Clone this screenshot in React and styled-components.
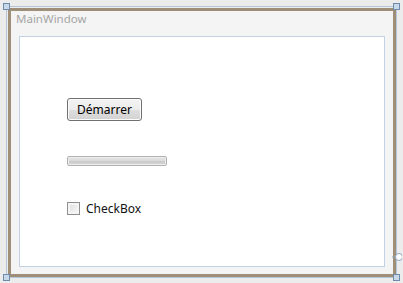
import React from "react";
import styled, { createGlobalStyle, css } from "styled-components";

const Global = createGlobalStyle`
  html, body { margin: 0; padding: 0; }
  body { font-family: "Noto Sans", "Open Sans", sans-serif; background: #ebebeb; }
`;

const Canvas = styled.div`
  position: relative;
  width: 403px;
  height: 283px;
  overflow: hidden;
  background: #ececec;
  padding: 8px 0 0 8px;
  box-sizing: border-box;
`;

const Selection = styled.div`
  position: absolute;
  left: 6px;
  top: 6px;
  width: 391px;
  height: 272px;
  border: 1px solid #b4c6da;
  box-sizing: border-box;
  pointer-events: none;
`;

const Handle = styled.div`
  position: absolute;
  width: 7px;
  height: 7px;
  box-sizing: border-box;
  border: 1px solid #6f8bab;
  background: #c9d8e8;
  ${(p) => (p.$v === "top" ? css`top: -4px;` : css`bottom: -4px;`)}
  ${(p) => (p.$h === "left" ? css`left: -4px;` : css`right: -4px;`)}
`;

const Adorner = styled.svg`
  position: absolute;
  right: -6px;
  bottom: 14px;
`;

const Frame = styled.div`
  width: 388px;
  height: 269px;
  box-sizing: border-box;
  border: 3px solid #a08f78;
  background: #f4f4f4;
  display: flex;
  flex-direction: column;
  padding: 0 8px 7px 8px;
`;

const Title = styled.div`
  font-size: 11.5px;
  color: #a6a6a6;
  height: 25px;
  line-height: 16px;
  margin-left: -3px;
`;

const Content = styled.div`
  flex: 1;
  background: #ffffff;
  border: 1px solid #c3d2e3;
  display: flex;
  flex-direction: column;
  align-items: flex-start;
  padding: 61px 0 0 47px;
`;

const Button = styled.button`
  width: 75px;
  height: 23px;
  box-sizing: border-box;
  border: 1px solid #707070;
  border-radius: 3px;
  background: linear-gradient(#f3f3f3 0%, #ececec 50%, #dedede 50%, #d2d2d2 100%);
  box-shadow: inset 0 0 0 1px #fcfcfc;
  font-family: "Noto Sans", "Open Sans", sans-serif;
  font-size: 12px;
  color: #000;
  padding: 0;
  line-height: 20px;
`;

const Progress = styled.div`
  margin-top: 35px;
  width: 100px;
  height: 10px;
  box-sizing: border-box;
  border: 1px solid #b2b2b2;
  border-radius: 2px;
  background: linear-gradient(#e6e6e6 0%, #dadada 50%, #cbcbcb 55%, #d6d6d6 100%);
  box-shadow: inset 0 0 0 1px #ededed;
`;

const CheckRow = styled.label`
  margin-top: 34px;
  display: flex;
  align-items: center;
  gap: 6px;
  font-size: 12px;
  color: #111;
`;

const Box = styled.span`
  width: 13px;
  height: 13px;
  box-sizing: border-box;
  border: 1px solid #8f8f8f;
  background: linear-gradient(135deg, #dcdcdc, #fafafa);
  box-shadow: inset 0 0 0 2px #f4f4f4;
`;

export default function App() {
  return (
    <>
      <Global />
      <Canvas>
        <Frame>
          <Title>MainWindow</Title>
          <Content>
            <Button>Démarrer</Button>
            <Progress />
            <CheckRow>
              <Box />
              CheckBox
            </CheckRow>
          </Content>
        </Frame>
        <Selection>
          <Handle $v="top" $h="left" />
          <Handle $v="top" $h="right" />
          <Handle $v="bottom" $h="left" />
          <Handle $v="bottom" $h="right" />
          <Adorner width="11" height="12" viewBox="0 0 11 12">
            <line x1="1" y1="6" x2="5" y2="6" stroke="#8ea4be" strokeWidth="1" />
            <circle cx="8" cy="6" r="3.5" fill="#fff" stroke="#8ea4be" strokeWidth="1" />
          </Adorner>
        </Selection>
      </Canvas>
    </>
  );
}
